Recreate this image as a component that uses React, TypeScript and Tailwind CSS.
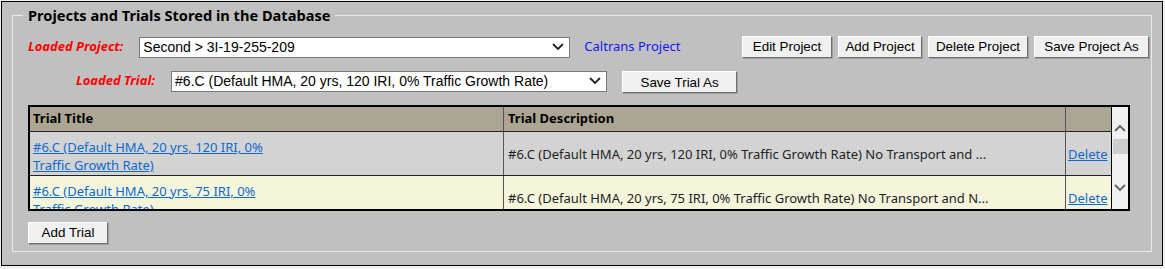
import React from 'react';

const ui = { fontFamily: '"Noto Sans", "Open Sans", sans-serif' };
const arial = { fontFamily: '"Liberation Sans", Arial, sans-serif' };

const Chevron = ({ up = false, className = '' }: { up?: boolean; className?: string }) => (
  <svg width="12" height="8" viewBox="0 0 12 8" className={className}>
    <path d={up ? 'M1 7 L6 2 L11 7' : 'M1 1 L6 6 L11 1'} fill="none" stroke="currentColor" strokeWidth="1.8" />
  </svg>
);

const FakeSelect = ({ value, width }: { value: string; width: string }) => (
  <div
    className={`${width} h-[21px] bg-white border border-[#7a7a7a] flex items-center pl-[3px] pr-[5px] text-[14px] text-black`}
    style={arial}
  >
    <span className="flex-1 truncate">{value}</span>
    <Chevron className="text-[#202020]" />
  </div>
);

const Btn = ({ label, width }: { label: string; width: string }) => (
  <button
    className={`${width} h-[22px] bg-[#f0f0f0] border border-t-white border-l-white border-r-[#6e6e6e] border-b-[#6e6e6e] shadow-[1px_1px_0_#a0a0a0] text-[13.4px] text-black leading-none`}
    style={arial}
  >
    {label}
  </button>
);

const rows = [
  {
    title: '#6.C (Default HMA, 20 yrs, 120 IRI, 0% Traffic Growth Rate)',
    desc: '#6.C (Default HMA, 20 yrs, 120 IRI, 0% Traffic Growth Rate) No Transport and ...',
    bg: 'bg-[#d3d3d3]',
  },
  {
    title: '#6.C (Default HMA, 20 yrs, 75 IRI, 0% Traffic Growth Rate)',
    desc: '#6.C (Default HMA, 20 yrs, 75 IRI, 0% Traffic Growth Rate) No Transport and N...',
    bg: 'bg-[#f5f5dc]',
  },
];

const App: React.FC = () => {
  return (
    <div className="min-h-screen bg-[#f0f0f0] pt-[1px] pl-[1px]">
      <div className="w-[1162px] h-[265px] border border-black bg-[#c0c0c0] px-[10px] pt-[3px]">
        <fieldset className="border border-[#e9e9e9] pl-[15px] pr-[2px] pb-[7px]">
          <legend className="ml-[-5px] px-[5px] text-[14.6px] leading-[20px] font-bold text-black" style={ui}>
            Projects and Trials Stored in the Database
          </legend>

          <div className="flex items-center h-[22px] mt-[11px]">
            <span className="text-[13px] font-bold italic text-[#ff0000]" style={ui}>
              Loaded Project:
            </span>
            <div className="ml-[16px]">
              <FakeSelect value="Second > 3I-19-255-209" width="w-[431px]" />
            </div>
            <a className="ml-[14px] text-[13px] text-[#1515ff]" style={ui}>
              Caltrans Project
            </a>
            <div className="ml-auto flex gap-[6px]">
              <Btn label="Edit Project" width="w-[90px]" />
              <Btn label="Add Project" width="w-[84px]" />
              <Btn label="Delete Project" width="w-[100px]" />
              <Btn label="Save Project As" width="w-[115px]" />
            </div>
          </div>

          <div className="flex items-center h-[22px] mt-[12px] pl-[48px]">
            <span className="text-[13px] font-bold italic text-[#ff0000]" style={ui}>
              Loaded Trial:
            </span>
            <div className="ml-[16px]">
              <FakeSelect value="#6.C (Default HMA, 20 yrs, 120 IRI, 0% Traffic Growth Rate)" width="w-[436px]" />
            </div>
            <div className="ml-[15px]">
              <Btn label="Save Trial As" width="w-[115px]" />
            </div>
          </div>

          <div className="mt-[13px] w-[1102px] h-[106px] border-2 border-black flex overflow-hidden" style={ui}>
            <div className="flex-1 overflow-hidden">
              <div className="grid grid-cols-[474px_1fr_45px] h-[25px] bg-[#aba593] border-b border-[#222] text-[13px] font-bold text-black">
                <div className="pl-[3px] flex items-center border-r border-[#555]">Trial Title</div>
                <div className="pl-[4px] flex items-center border-r border-[#555]">Trial Description</div>
                <div />
              </div>
              {rows.map((r, i) => (
                <div
                  key={i}
                  className={`grid grid-cols-[474px_1fr_45px] h-[44px] ${r.bg} border-b border-[#222] text-[13px] leading-[18px]`}
                >
                  <div className="pl-[3px] pt-[6px] border-r border-[#555]">
                    <a className="block w-[250px] text-[#0d6ad1] underline">{r.title}</a>
                  </div>
                  <div className="pl-[4px] flex items-center border-r border-[#555] text-[#1e1e1e] whitespace-nowrap overflow-hidden">
                    {r.desc}
                  </div>
                  <div className="pl-[2px] flex items-center">
                    <a className="text-[#0d6ad1] underline">Delete</a>
                  </div>
                </div>
              ))}
            </div>
            <div className="w-[17px] bg-[#f0f0f0] flex flex-col items-center border-l border-black">
              <Chevron up className="mt-[17px] text-[#606060]" />
              <div className="mt-[7px] w-[15px] h-[15px] bg-[#cdcdcd]" />
              <Chevron className="mt-[30px] text-[#606060]" />
            </div>
          </div>

          <div className="mt-[8px]">
            <Btn label="Add Trial" width="w-[80px]" />
          </div>
        </fieldset>
      </div>
    </div>
  );
};

export default App;
